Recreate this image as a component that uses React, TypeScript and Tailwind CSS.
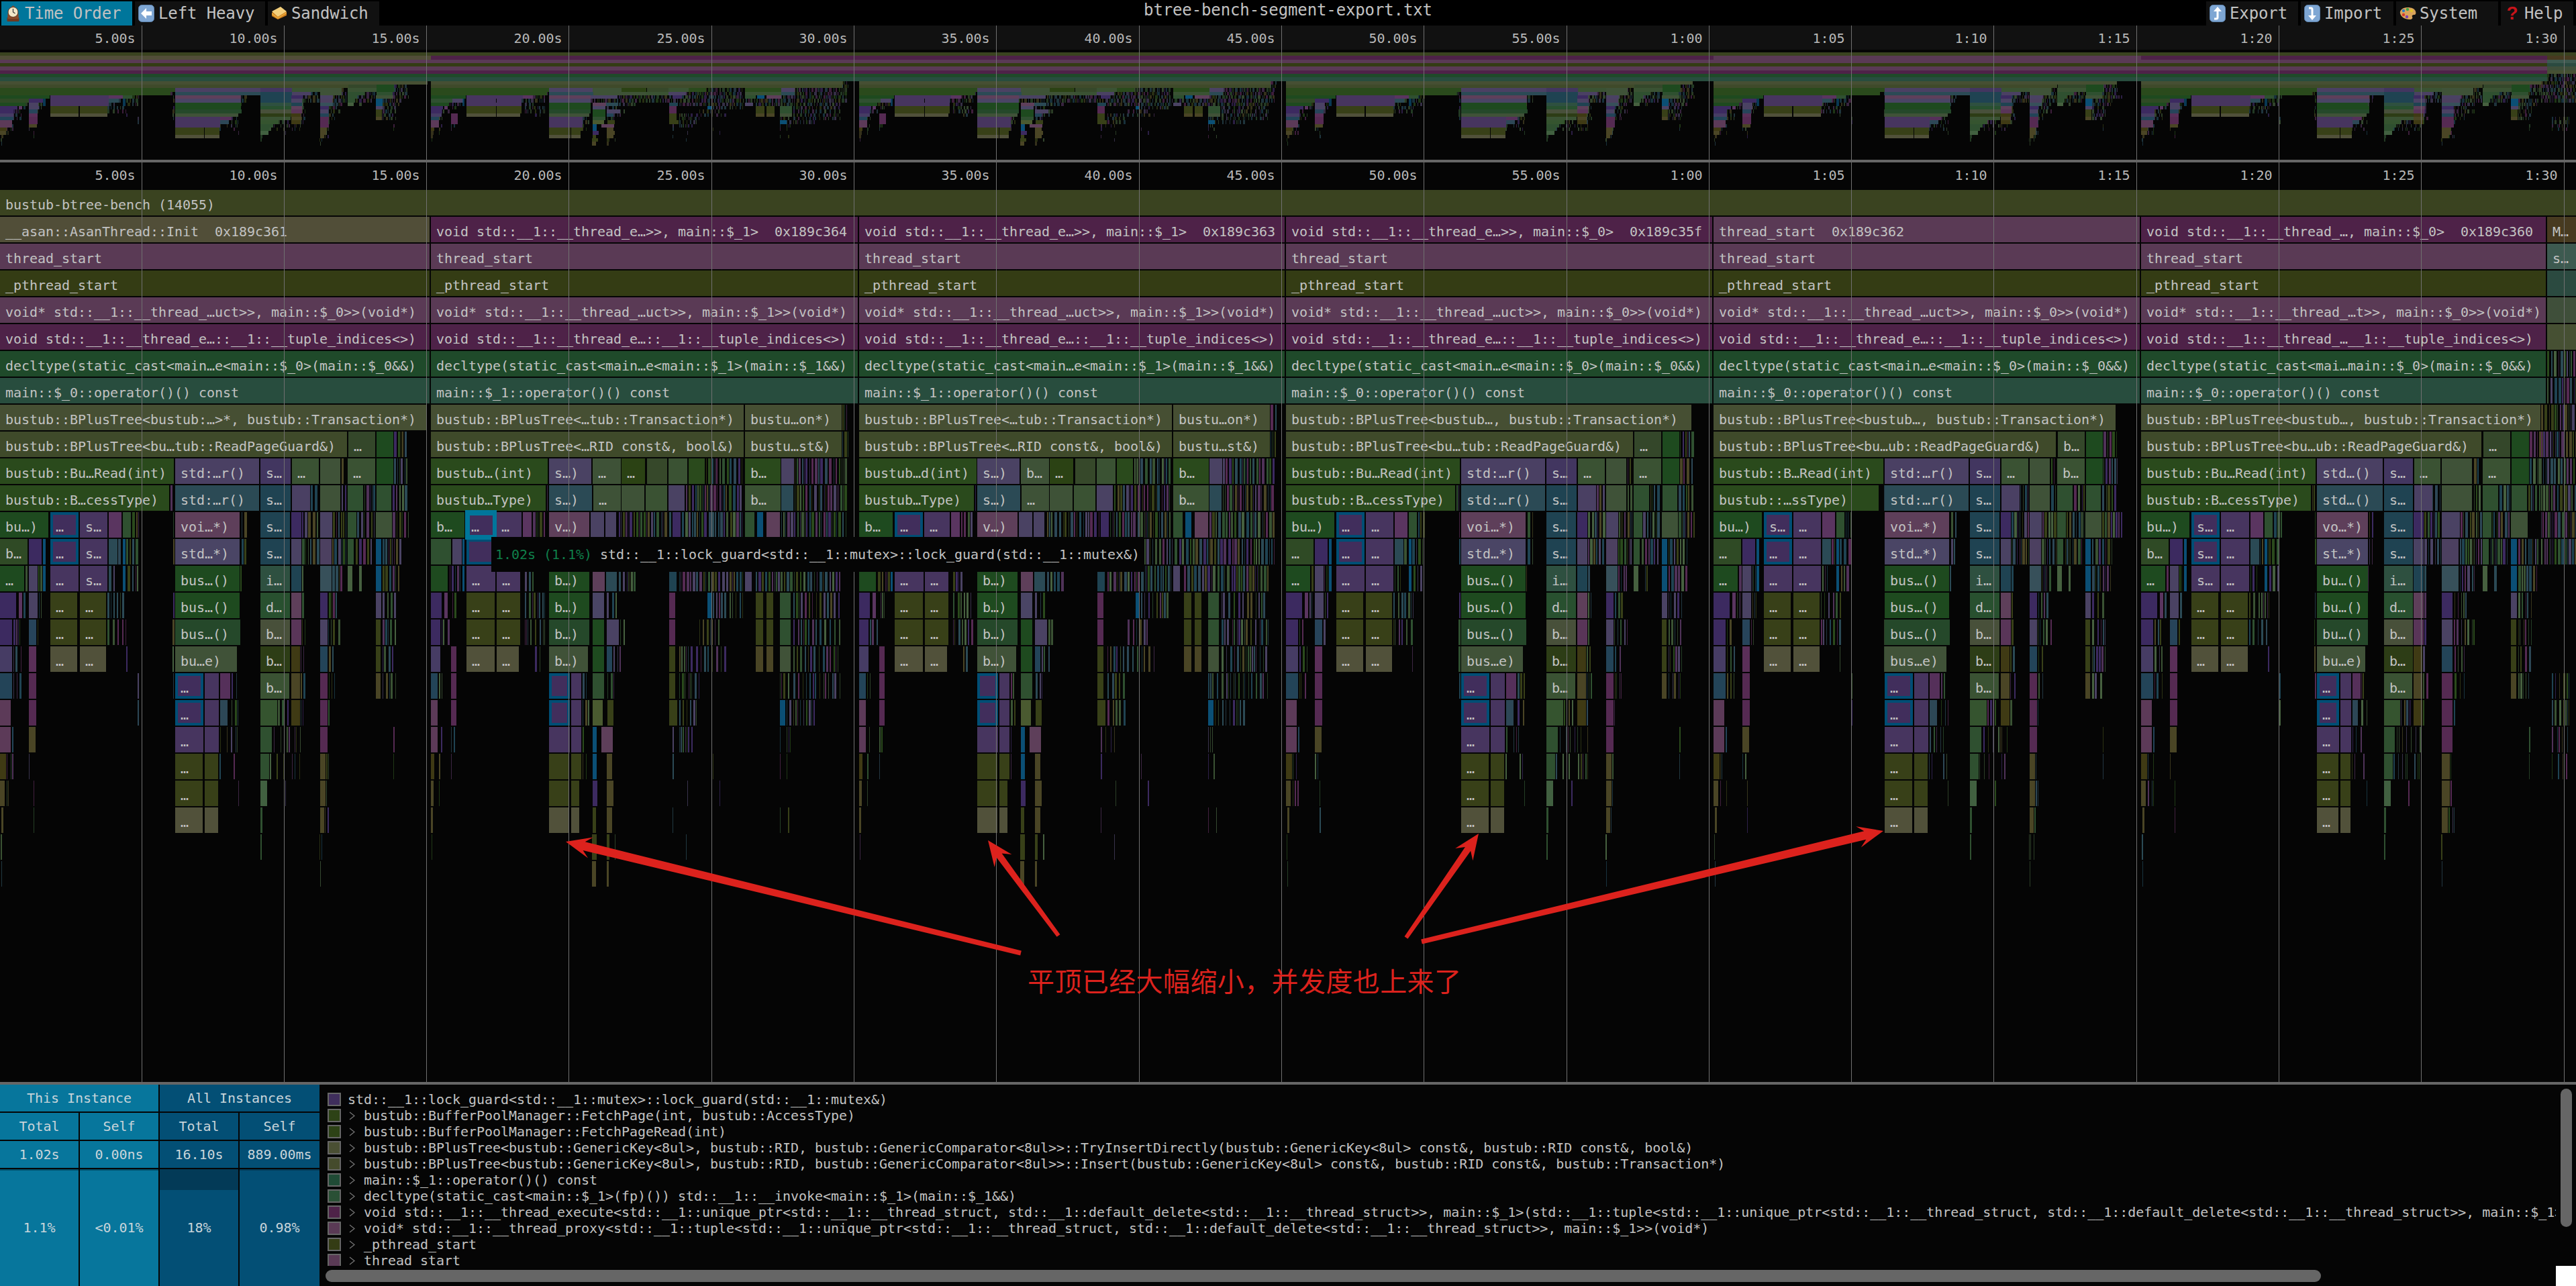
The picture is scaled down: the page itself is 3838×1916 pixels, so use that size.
import type { ReactNode } from 'react';

type Cell = [number, number, string, string?];
type ThreadDef = {
  x0: number;
  x1: number;
  rows: Record<number, Cell[]>;
  head: Record<number, string>;
  labels?: Record<string, string>;
  map?: number[][];
};

// flame colours
const G1 = '#1e4a1f';
const G2 = '#2f5030';
const D = '#2a4a1c';
const M = '#3a5233';
const T1 = '#1f4352';
const T2 = '#234458';
const T3 = '#37505a';
const P2 = '#47355f';
const P3 = '#4a4263';
const P4 = '#3c2a60';
const PK = '#5e3f5a';
const PK2 = '#552a52';
const O1 = '#384018';
const O2 = '#51513a';
const O4 = '#3f3a14';
const O5 = '#4a4525';
const B = '#0b4f75';
const SEL = 'sel';
const S = '~'; // zone of thin slivers

const TREE = '#464f33';
const TREE2 = '#3f4a2a';

const SLIVERS = [G2, P3, P4, '#4f3258', T1, M, D, '#2d4756', O1, '#2b4a55', PK2, '#46603f', O5];

// call tree below row 11 for the threads running main::$_0
const rowsA: Record<number, Cell[]> = {
  9: [[519, 559, '#34472a', '…'], [561, 586, G1], [587, 608, S]],
  10: [[261, 386, '#4a4063', 'std:…r()'], [388, 433, '#423660', 's…'], [435, 475, M, '…'], [477, 507, '#3f5238'], [509, 514, S], [518, 559, M, '…'], [561, 586, G1], [587, 608, S]],
  11: [[254, 258, S], [261, 386, '#2b4a55', 'std:…r()'], [388, 433, T1, 's…'], [435, 462, '#4a4063'], [463, 475, S], [477, 507, '#3f5238'], [509, 516, S], [518, 541, G2], [543, 559, S], [561, 583, G2], [585, 608, S]],
  12: [[0, 72, G1, 'bu…)'], [75, 117, SEL, '…'], [119, 160, P2, '…'], [162, 181, '#5a3560'], [183, 195, G2], [197, 209, S], [258, 259, S], [261, 357, PK, 'voi…*)'], [360, 368, S], [388, 432, T1, 's…'], [434, 449, P4], [450, 476, S], [477, 495, P3], [496, 517, S], [518, 531, G2], [532, 558, S], [560, 584, '#3e5237'], [585, 609, S]],
  13: [[0, 41, '#2f4a25', '…'], [43, 62, P4], [64, 68, B], [75, 117, SEL, '…'], [119, 160, P2, '…'], [162, 175, '#2b4a55'], [176, 181, S], [183, 187, B], [188, 206, S], [258, 260, S], [261, 357, '#4a4565', 'std…*)'], [360, 368, S], [388, 432, T1, 's…'], [434, 449, P3], [450, 476, S], [477, 494, '#4c4060'], [495, 517, S], [518, 527, G2], [530, 555, S], [560, 568, B], [570, 600, S]],
  14: [[0, 36, G1, '…'], [38, 42, S], [43, 56, P3], [57, 63, S], [64, 68, B], [75, 117, P2, '…'], [119, 160, P2, '…'], [162, 172, S], [183, 187, B], [190, 206, S], [261, 357, G1, 'bus…()'], [358, 360, S], [388, 432, '#2e5040', 'i…'], [434, 449, T1], [450, 453, S], [477, 494, T3], [495, 510, S], [518, 525, '#46603f'], [535, 540, S], [560, 568, B], [570, 598, S]],
  15: [[0, 24, P4], [28, 33, '#5a3560'], [35, 42, S], [43, 56, P3], [58, 64, S], [75, 115, O1, '…'], [119, 158, O1, '…'], [160, 190, S], [258, 260, S], [261, 357, G1, 'bus…()'], [388, 432, '#28502f', 'd…'], [434, 449, PK], [450, 455, S], [477, 488, P4], [490, 505, S], [560, 568, P3], [570, 590, S]],
  16: [[0, 18, P4], [20, 30, S], [43, 54, '#27445a'], [56, 60, S], [75, 115, O1, '…'], [119, 158, O1, '…'], [160, 190, S], [257, 260, S], [261, 358, '#25482a', 'bus…()'], [388, 432, '#48503a', 'b…'], [434, 449, '#593558'], [450, 455, S], [477, 488, P3], [489, 510, S], [560, 567, O1], [570, 590, S]],
  17: [[0, 18, '#463c64'], [20, 32, S], [43, 54, '#5a2f58'], [75, 115, O2, '…'], [119, 158, O2, '…'], [188, 190, S], [257, 260, S], [261, 353, '#405238', 'bu…e)'], [388, 432, '#2d3d16', 'b…'], [434, 447, O4], [448, 455, S], [477, 488, T2], [490, 500, S], [560, 567, O1], [570, 590, S]],
  18: [[0, 18, T2], [20, 32, S], [43, 54, PK2], [205, 207, S], [258, 260, S], [261, 303, SEL, '…'], [305, 326, P2], [328, 343, '#55305a'], [345, 356, S], [388, 431, M, 'b…'], [434, 447, O5], [448, 456, S], [477, 488, PK2], [490, 500, S], [560, 567, O5], [570, 590, S]],
  19: [[0, 16, '#5c3a58'], [43, 54, PK2], [205, 207, S], [261, 303, SEL, '…'], [305, 326, P2], [328, 339, '#2d4756'], [345, 356, S], [388, 413, '#35542f'], [414, 430, S], [434, 447, O4], [448, 452, S], [477, 488, PK2], [489, 491, S]],
  20: [[0, 16, '#5c3a58'], [18, 20, T2], [43, 53, O5], [261, 303, P2, '…'], [305, 326, P2], [328, 354, S], [388, 405, G2], [408, 450, S], [477, 488, PK2], [586, 588, S]],
  21: [[0, 9, O4], [10, 20, S], [43, 51, S], [261, 302, O1, '…'], [305, 325, O1], [327, 333, S], [348, 355, S], [388, 401, G2], [402, 425, S], [435, 450, S], [477, 485, O5], [486, 490, S], [586, 588, S]],
  22: [[0, 7, O5], [10, 20, S], [50, 52, S], [261, 302, O1, '…'], [305, 325, O1], [355, 357, S], [388, 398, '#416040'], [425, 427, S], [477, 485, O5], [486, 490, S]],
  23: [[2, 5, O5], [50, 52, S], [261, 302, O2, '…'], [305, 325, O2], [388, 391, G2], [477, 483, O5], [484, 490, S]],
  24: [[1, 4, S], [388, 390, G2], [476, 484, S]],
  25: [[2, 3, S], [477, 479, S]],
};

// same, for the threads running main::$_1
const rowsB: Record<number, Cell[]> = {
  8: [[613, 622, S]],
  9: [[613, 622, S]],
  10: [[176, 239, P3, 's…)'], [241, 283, '#3e5237', '…'], [284, 319, '#2b4214', '…'], [322, 352, '#36482a'], [354, 382, M], [384, 408, D], [410, 464, S], [468, 521, D, 'b…'], [522, 541, P3], [542, 620, S]],
  11: [[173, 174, S], [176, 240, '#2b4a55', 's…)'], [242, 283, '#3e5237', '…'], [284, 318, '#3e5237'], [320, 352, M], [354, 378, P3], [380, 464, S], [468, 521, M, 'b…'], [522, 540, '#2b4a55'], [542, 620, S]],
  12: [[0, 50, G1, 'b…'], [53, 95, SEL, '…'], [97, 135, P2, '…'], [137, 150, '#5a3560'], [152, 170, S], [176, 236, PK, 'v…)'], [238, 258, P3], [260, 276, P3], [280, 358, S], [360, 372, P4], [374, 464, S], [468, 482, G2], [486, 495, B], [500, 520, PK], [522, 620, S]],
  13: [[0, 30, G2], [32, 46, P3], [47, 50, B], [53, 95, SEL], [98, 133, P2], [135, 170, S], [176, 236, '#4a4565'], [238, 620, S]],
  14: [[0, 25, G1], [28, 46, S], [47, 50, B], [53, 96, P2, '…'], [98, 133, P2, '…'], [140, 155, S], [176, 236, G1, 'b…)'], [241, 259, PK], [261, 277, '#2b4a55'], [280, 305, S], [355, 366, '#1f4352'], [370, 465, S], [468, 478, P3], [484, 610, S]],
  15: [[0, 16, P4], [20, 25, '#5a3560'], [32, 40, S], [53, 95, O1, '…'], [98, 133, O1, '…'], [140, 170, S], [176, 236, G1, 'b…)'], [241, 258, '#4a4565'], [262, 280, S], [355, 364, PK2], [412, 418, B], [420, 465, S], [484, 495, O1], [500, 510, O1], [520, 536, G2], [540, 610, S]],
  16: [[0, 14, P4], [16, 30, S], [53, 95, O1, '…'], [98, 133, O1, '…'], [140, 170, S], [176, 236, '#25482a', 'b…)'], [241, 258, G1], [262, 280, P3], [282, 290, S], [355, 364, PK2], [400, 430, S], [484, 495, O1], [500, 510, O1], [520, 536, G2], [540, 610, S]],
  17: [[0, 14, '#463c64'], [30, 38, PK2], [53, 95, O2, '…'], [98, 131, O2, '…'], [155, 165, S], [176, 234, '#405238', 'b…)'], [241, 258, G1], [262, 270, T2], [272, 284, S], [355, 364, O1], [370, 440, S], [484, 495, O5], [500, 510, O5], [520, 536, '#405238'], [540, 610, S]],
  18: [[0, 10, T2], [12, 22, S], [30, 38, PK2], [176, 207, SEL], [209, 224, P2], [226, 234, S], [241, 258, G2], [263, 273, S], [355, 364, O1], [370, 400, S], [520, 536, S], [540, 610, S]],
  19: [[0, 10, '#5c3a58'], [30, 38, PK2], [176, 207, SEL], [209, 224, P2], [226, 236, S], [241, 256, '#4a5a30'], [263, 272, O1], [355, 367, O1], [370, 400, S], [520, 528, B], [530, 575, S]],
  20: [[0, 10, '#5c3a58'], [15, 17, S], [30, 36, S], [176, 207, P2], [209, 224, P2], [226, 234, S], [241, 247, B], [254, 271, PK], [360, 390, S], [520, 536, S]],
  21: [[0, 5, O4], [12, 16, S], [30, 34, S], [176, 206, O1], [209, 224, O1], [226, 232, S], [241, 247, B], [262, 270, O5], [360, 364, S], [420, 422, S], [520, 533, S]],
  22: [[0, 4, O5], [12, 14, S], [176, 206, O1], [209, 221, O1], [241, 248, P4], [262, 272, O5], [382, 384, S], [430, 432, S]],
  23: [[0, 3, O5], [176, 206, O2], [209, 221, O2], [241, 246, O1], [262, 270, O5], [360, 363, S], [520, 522, S], [532, 534, S]],
  24: [[1, 2, S], [240, 247, O1], [262, 266, O1], [274, 276, S], [380, 382, S]],
  25: [[240, 246, O5], [262, 265, O5]],
};

const rng = (seed: number) => () => {
  seed = (seed + 0x6d2b79f5) | 0;
  let t = Math.imul(seed ^ (seed >>> 15), 1 | seed);
  t = (t + Math.imul(t ^ (t >>> 7), 61 | t)) ^ t;
  return ((t ^ (t >>> 14)) >>> 0) / 4294967296;
};

const head = (n: string, r1: string, r4: string, r5: string, r6: string) => ({
  1: r1,
  2: 'thread_start',
  3: '_pthread_start',
  4: r4,
  5: r5,
  6: r6,
  7: `main::$_${n}::operator()() const`,
});

const v4 = (n: string) => `void* std::__1::__thread_…uct>>, main::$_${n}>>(void*)`;
const v5 = 'void std::__1::__thread_e…::__1::__tuple_indices<>)';
const v6 = (n: string) => `decltype(static_cast<main…e<main::$_${n}>(main::$_${n}&&)`;

const THREADS: ThreadDef[] = [
  {
    x0: 0,
    x1: 640,
    rows: rowsA,
    head: {
      ...head('0', '__asan::AsanThread::Init  0x189c361', v4('0'), v5, v6('0')),
      8: 'bustub::BPlusTree<bustub:…>*, bustub::Transaction*)|635',
      9: 'bustub::BPlusTree<bu…tub::ReadPageGuard&)|517',
      10: 'bustub::Bu…Read(int)|259',
      11: 'bustub::B…cessType)|252',
    },
    labels: { '12:119': 's…', '13:0': 'b…', '13:119': 's…', '14:119': 's…' },
  },
  {
    x0: 642,
    x1: 1278,
    rows: rowsB,
    head: {
      ...head('1', 'void std::__1::__thread_e…>>, main::$_1>  0x189c364', v4('1'), v5, v6('1')),
      8: 'bustub::BPlusTree<…tub::Transaction*)|466',
      9: 'bustub::BPlusTree<…RID const&, bool&)|466',
      10: 'bustub…(int)|174',
      11: 'bustub…Type)|171',
    },
    labels: {},
  },
  {
    x0: 1280,
    x1: 1914,
    rows: rowsB,
    head: {
      ...head('1', 'void std::__1::__thread_e…>>, main::$_1>  0x189c363', v4('1'), v5, v6('1')),
      8: 'bustub::BPlusTree<…tub::Transaction*)|466',
      9: 'bustub::BPlusTree<…RID const&, bool&)|466',
      10: 'bustub…d(int)|175',
      11: 'bustub…Type)|171',
    },
    labels: { '10:241': 'b…', '10:284': '…' },
  },
  {
    x0: 1916,
    x1: 2551,
    rows: rowsA,
    head: {
      ...head('0', 'void std::__1::__thread_e…>>, main::$_0>  0x189c35f', v4('0'), v5, v6('0')),
      8: 'bustub::BPlusTree<bustub…, bustub::Transaction*)|604',
      9: 'bustub::BPlusTree<bu…tub::ReadPageGuard&)|517',
      10: 'bustub::Bu…Read(int)|259',
      11: 'bustub::B…cessType)|252',
    },
    labels: { '17:261': 'bus…e)' },
  },
  {
    x0: 2553,
    x1: 3188,
    rows: rowsA,
    head: {
      ...head('0', 'thread_start  0x189c362', v4('0'), v5, v6('0')),
      8: 'bustub::BPlusTree<bustub…, bustub::Transaction*)|599',
      9: 'bustub::BPlusTree<bu…ub::ReadPageGuard&)|510',
      10: 'bustub::B…Read(int)|253',
      11: 'bustub::…ssType)|246',
    },
    labels: { '12:75': 's…', '9:519': 'b…', '10:518': 'b…', '17:261': 'bus…e)' },
    map: [[0, 0], [254, 254], [261, 255], [608, 602]],
  },
  {
    x0: 3190,
    x1: 3793,
    rows: rowsA,
    head: {
      ...head(
        '0',
        'void std::__1::__thread_…, main::$_0>  0x189c360',
        'void* std::__1::__thread_…t>>, main::$_0>>(void*)',
        'void std::__1::__thread_…__1::__tuple_indices<>)',
        'decltype(static_cast<mai…main::$_0>(main::$_0&&)',
      ),
      8: 'bustub::BPlusTree<bustub…, bustub::Transaction*)|595',
      9: 'bustub::BPlusTree<bu…ub::ReadPageGuard&)|507',
      10: 'bustub::Bu…Read(int)|260',
      11: 'bustub::B…cessType)|253',
    },
    labels: {
      '12:75': 's…',
      '13:75': 's…',
      '14:75': 's…',
      '13:0': 'b…',
      '10:261': 'std…()',
      '11:261': 'std…()',
      '12:261': 'vo…*)',
      '13:261': 'st…*)',
      '14:261': 'bu…()',
      '15:261': 'bu…()',
      '16:261': 'bu…()',
    },
    map: [[0, 0], [261, 262], [388, 362], [477, 448], [518, 509], [608, 600]],
  },
];

const rowColors: Record<number, string> = {
  2: '#5a3a55',
  3: '#343c14',
  4: '#5a3a55',
  5: '#4e2248',
  6: '#1f4a2a',
  7: '#284d3e',
  8: TREE,
  9: TREE2,
  10: D,
  11: D,
};

type Box = { x: number; w: number; r: number; fill: string; label?: string };

function buildCells(): Box[] {
  const out: Box[] = [{ x: 0, w: 3838, r: 0, fill: '#3a4320', label: 'bustub-btree-bench (14055)' }];
  const rand = rng(71);

  const sliver = (x0: number, x1: number, r: number) => {
    const gap = r < 15 ? 2.5 : r < 20 ? 5 : 9;
    const max = r < 15 ? 4 : r < 20 ? 3 : 1.5;
    let x = x0;
    while (x < x1) {
      const w = Math.min(1 + Math.floor(rand() * max), x1 - x);
      out.push({ x, w: Math.max(w, 1), r, fill: SLIVERS[Math.floor(rand() * SLIVERS.length)] });
      x += w + 1 + Math.floor(rand() * gap);
    }
  };

  THREADS.forEach((t, ti) => {
    const pts = t.map;
    const at = (x: number) => {
      if (!pts) return x;
      for (let i = 1; i < pts.length; i++) {
        if (x <= pts[i][0]) {
          const [a, b] = pts[i - 1];
          const [c, d] = pts[i];
          return b + ((x - a) * (d - b)) / (c - a);
        }
      }
      return x;
    };

    for (let r = 1; r <= 11; r++) {
      const [text, end] = t.head[r].split('|');
      const x1 = end ? t.x0 + Number(end) : t.x1;
      const fill =
        r === 1 ? (ti === 0 ? '#514e38' : ti === 4 ? '#5a3a55' : '#4e2248') : rowColors[r];
      out.push({ x: t.x0, w: x1 - t.x0, r, fill, label: text });
    }

    if (t.rows === rowsB) {
      out.push({ x: t.x0 + 468, w: 144, r: 8, fill: TREE, label: 'bustu…on*)' });
      out.push({ x: t.x0 + 468, w: 144, r: 9, fill: TREE2, label: 'bustu…st&)' });
    }

    Object.entries(t.rows).forEach(([rowKey, cells]) => {
      const r = Number(rowKey);
      cells.forEach(([a, b, fill, label]) => {
        const x0 = t.x0 + Math.round(at(a));
        const x1 = t.x0 + Math.round(at(b));
        if (x1 > t.x1) return;
        if (fill === S) {
          sliver(x0, x1, r);
          return;
        }
        out.push({ x: x0, w: x1 - x0, r, fill, label: t.labels?.[`${r}:${a}`] ?? label });
      });
    });
  });

  // the short thread at the far right
  const lastCol: [number, string, string?][] = [
    [1, '#473a20', 'M…'],
    [2, '#3d5a50', 's…'],
    [3, '#2b4a40'],
    [4, '#3f4f3a'],
    [5, '#465033'],
  ];
  lastCol.forEach(([r, fill, label]) => out.push({ x: 3795, w: 43, r, fill, label }));
  for (let r = 6; r <= 13; r++) sliver(r < 8 ? 3795 : 3786, 3838, r);
  for (let r = 14; r <= 17; r++) sliver(3802, 3830, r + 4);

  return out;
}

const CELLS = buildCells();

const TICKS = Array.from({ length: 18 }, (_, i) => {
  const n = i + 1;
  const secs = n * 5;
  const label =
    secs < 60 ? `${secs}.00s` : `${Math.floor(secs / 60)}:${String(secs % 60).padStart(2, '0')}`;
  return { x: Math.round(212.3 * n - 1.8) + 0.5, label };
});

function Minimap() {
  return (
    <svg width={3838} height={200} className="block">
      <rect x={0} y={0} width={3838} height={36} fill="#111111" />
      <rect x={0} y={36} width={3838} height={4} fill="#050505" />
      {CELLS.map((c, i) => (
        <rect
          key={i}
          x={c.x}
          y={40 + c.r * 5.33}
          width={c.w + (c.w > 6 ? 2 : 0)}
          height={5.4}
          fill={c.fill === SEL ? P2 : c.fill}
          fillOpacity={c.w <= 4 ? 0.7 : 1}
          shapeRendering="crispEdges"
        />
      ))}
      {TICKS.map((t) => (
        <g key={t.x}>
          <line x1={t.x} x2={t.x} y1={0} y2={200} stroke="#707070" strokeWidth={1} />
          <text x={t.x - 10} y={26} textAnchor="end" className="fill-[#b8b8b8] text-[20px]">
            {t.label}
          </text>
        </g>
      ))}
    </svg>
  );
}

function FlameCell({ c }: { c: Box }) {
  const y = 41 + c.r * 40;
  return (
    <>
      <rect
        x={c.x}
        y={y}
        width={c.w}
        height={38}
        fill={c.fill === SEL ? '#004E75' : c.fill}
        fillOpacity={c.w <= 1 ? 0.75 : 1}
        shapeRendering="crispEdges"
      />
      {c.fill === SEL && (
        <rect x={c.x + 4} y={y + 4} width={c.w - 8} height={30} fill="#412E5C" shapeRendering="crispEdges" />
      )}
      {c.label && (
        <text x={c.x + 8} y={y + 29} className="fill-[#c2c2c2] text-[20px] whitespace-pre">
          {c.label}
        </text>
      )}
    </>
  );
}

function arrowPoints(tail: number[], tip: number[], wTail: number, wNeck: number) {
  const dx = tip[0] - tail[0];
  const dy = tip[1] - tail[1];
  const len = Math.hypot(dx, dy);
  const ux = dx / len;
  const uy = dy / len;
  const nx = -uy;
  const ny = ux;
  const along = (d: number, side: number) => [tip[0] - ux * d + nx * side, tip[1] - uy * d + ny * side];
  const pts = [
    [tail[0] + (nx * wTail) / 2, tail[1] + (ny * wTail) / 2],
    along(28, wNeck / 2),
    along(38, 16),
    tip,
    along(38, -16),
    along(28, -wNeck / 2),
    [tail[0] - (nx * wTail) / 2, tail[1] - (ny * wTail) / 2],
  ];
  return pts.map((p) => p.join(',')).join(' ');
}

function FlameChart() {
  return (
    <div className="relative h-[1370px] w-full">
      <svg width={3838} height={1370} className="block">
        {TICKS.map((t) => (
          <text key={t.x} x={t.x - 10} y={26} textAnchor="end" className="fill-[#b8b8b8] text-[20px]">
            {t.label}
          </text>
        ))}
        {CELLS.map((c, i) => (
          <FlameCell key={i} c={c} />
        ))}
        {/* hovered frame */}
        <rect x={693} y={518} width={47} height={44} fill="#00769B" shapeRendering="crispEdges" />
        <rect x={700} y={526} width={34} height={29} fill="#412E5C" shapeRendering="crispEdges" />
        <text x={702} y={550} className="fill-[#c2c2c2] text-[20px]">
          …
        </text>
        {TICKS.map((t) => (
          <line key={t.x} x1={t.x} x2={t.x} y1={0} y2={1370} stroke="#707070" strokeWidth={1} />
        ))}
      </svg>

      {/* tooltip */}
      <div className="absolute left-[732px] top-[558px] flex h-[52px] w-[973px] items-center bg-[#050505] pl-[6px] whitespace-pre">
        <span className="text-[#0f7f4a]">1.02s (1.1%)</span>
        <span> std::__1::lock_guard&lt;std::__1::mutex&gt;::lock_guard(std::__1::mutex&amp;)</span>
      </div>

      {/* annotation drawn on top of the screenshot */}
      <svg width={3838} height={1370} className="pointer-events-none absolute left-0 top-0">
        <g fill="#dc221d">
          <polygon points={arrowPoints([1521, 1178], [843, 1012], 7, 13)} />
          <polygon points={arrowPoints([1577, 1152], [1472, 1010], 6, 10)} />
          <polygon points={arrowPoints([2095, 1155], [2203, 1000], 6, 10)} />
          <polygon points={arrowPoints([2118, 1161], [2806, 996], 7, 13)} />
        </g>
      </svg>
      <div className="absolute left-[1531px] top-[1198px] font-['Noto_Sans_CJK_SC',sans-serif] text-[40px] leading-[40px] tracking-[0.4px] whitespace-pre text-[#dc221d]">
        平顶已经大幅缩小，并发度也上来了
      </div>
    </div>
  );
}

const ClockIcon = () => (
  <svg width={25} height={24} viewBox="0 0 24 24">
    <rect x={3} y={18} width={18} height={6} rx={1} fill="#6f3a20" />
    <path d="M4 20Q2 8 12 0Q22 8 20 20Z" fill="#8b4a2a" />
    <circle cx={12} cy={10} r={7.5} fill="#f2e6c8" stroke="#5f3319" />
    <path d="M12 5v5l3 2" stroke="#333" strokeWidth={1.2} fill="none" />
  </svg>
);

const ArrowBox = ({ d }: { d: ReactNode }) => (
  <svg width={24} height={26} viewBox="0 0 24 26">
    <rect x={0.5} y={0.5} width={23} height={25} rx={5} fill="#7ea6d3" stroke="#5c82ad" />
    {d}
  </svg>
);

const SandwichIcon = () => (
  <svg width={24} height={20} viewBox="0 0 24 20">
    <path d="M1 9L14 1l9 7v5L10 19 1 14Z" fill="#c9791c" />
    <path d="M1 7L14 0l9 7L10 15Z" fill="#f3cf7c" />
    <path d="M1 9l9 7 13-8v2L10 18 1 12Z" fill="#e8a93a" />
  </svg>
);

const PaletteIcon = () => (
  <svg width={25} height={20} viewBox="0 0 25 20">
    <path d="M12 1C5 1 0 5 1 10c1 5 7 9 14 9 4 0 5-2 4-4-1-2 1-3 3-3 2 0 3-2 2-5-1-4-6-6-12-6Z" fill="#d9a35a" />
    <circle cx={6} cy={6} r={2.2} fill="#2f7fc1" />
    <circle cx={12} cy={4} r={2.2} fill="#3da24a" />
    <circle cx={18} cy={6} r={2.2} fill="#e2c22c" />
    <circle cx={6} cy={12} r={2.2} fill="#d43a2f" />
    <circle cx={11} cy={15} r={2.2} fill="#7a3fb0" />
  </svg>
);

function ToolButton({ className, icon, label }: { className: string; icon: ReactNode; label: string }) {
  return (
    <div className={`flex h-[36px] items-center bg-[#111111] ${className}`}>
      <span className="flex w-[32px] justify-center pl-[2px]">{icon}</span>
      <span className="pl-[3px] text-[24px] tracking-[-0.12px]">{label}</span>
    </div>
  );
}

function Toolbar() {
  return (
    <div className="grid h-[38px] grid-cols-[1fr_auto_1fr] items-end bg-black">
      <div className="flex gap-[4px] pl-[2px]">
        <ToolButton className="w-[195px] bg-[#00769B]!" icon={<ClockIcon />} label="Time Order" />
        <ToolButton
          className="w-[194px]"
          icon={
            <ArrowBox d={<path d="M4 13l8-8v5h8v6h-8v5Z" fill="#ffffff" />} />
          }
          label="Left Heavy"
        />
        <ToolButton className="w-[166px]" icon={<SandwichIcon />} label="Sandwich" />
      </div>
      <div className="h-[32px] self-start text-center text-[24px] leading-[30px] tracking-[-0.12px]">
        btree-bench-segment-export.txt
      </div>
      <div className="flex justify-end gap-[4px] pr-[4px]">
        <ToolButton
          className="w-[137px]"
          icon={
            <ArrowBox
              d={
                <>
                  <path d="M7 21h3a2 2 0 0 0 2-2V9" stroke="#ffffff" strokeWidth={3} fill="none" />
                  <path d="M12 3l6 7H6Z" fill="#ffffff" />
                </>
              }
            />
          }
          label="Export"
        />
        <ToolButton
          className="w-[138px]"
          icon={
            <ArrowBox
              d={
                <>
                  <path d="M7 5h3a2 2 0 0 1 2 2v10" stroke="#ffffff" strokeWidth={3} fill="none" />
                  <path d="M12 23l6-7H6Z" fill="#ffffff" />
                </>
              }
            />
          }
          label="Import"
        />
        <ToolButton className="w-[152px]" icon={<PaletteIcon />} label="System" />
        <ToolButton
          className="w-[108px]"
          icon={
            <span className="font-['Liberation_Sans',sans-serif] text-[28px] leading-[28px] font-bold text-[#c9141a]">
              ?
            </span>
          }
          label="Help"
        />
      </div>
    </div>
  );
}

const STACK = [
  ['bg-[#3f2e5c]', 'std::__1::lock_guard<std::__1::mutex>::lock_guard(std::__1::mutex&)'],
  ['bg-[#2d4216]', 'bustub::BufferPoolManager::FetchPage(int, bustub::AccessType)'],
  ['bg-[#2d4216]', 'bustub::BufferPoolManager::FetchPageRead(int)'],
  ['bg-[#4a4f33]', 'bustub::BPlusTree<bustub::GenericKey<8ul>, bustub::RID, bustub::GenericComparator<8ul>>::TryInsertDirectly(bustub::GenericKey<8ul> const&, bustub::RID const&, bool&)'],
  ['bg-[#454b2c]', 'bustub::BPlusTree<bustub::GenericKey<8ul>, bustub::RID, bustub::GenericComparator<8ul>>::Insert(bustub::GenericKey<8ul> const&, bustub::RID const&, bustub::Transaction*)'],
  ['bg-[#1f4a35]', 'main::$_1::operator()() const'],
  ['bg-[#2a5035]', 'decltype(static_cast<main::$_1>(fp)()) std::__1::__invoke<main::$_1>(main::$_1&&)'],
  ['bg-[#4e2248]', 'void std::__1::__thread_execute<std::__1::unique_ptr<std::__1::__thread_struct, std::__1::default_delete<std::__1::__thread_struct>>, main::$_1>(std::__1::tuple<std::__1::unique_ptr<std::__1::__thread_struct, std::__1::default_delete<std::__1::__thread_struct>>, main::$_1>&, std::__1::__tuple_indices<>)'],
  ['bg-[#5a3a55]', 'void* std::__1::__thread_proxy<std::__1::tuple<std::__1::unique_ptr<std::__1::__thread_struct, std::__1::default_delete<std::__1::__thread_struct>>, main::$_1>>(void*)'],
  ['bg-[#343c14]', '_pthread_start'],
  ['bg-[#5a3a55]', 'thread_start'],
];

function StatCell({ className, children }: { className: string; children: ReactNode }) {
  return <div className={`flex items-center justify-center ${className}`}>{children}</div>;
}

function Bar({ className, pct, dark, label }: { className: string; pct: number; dark: string; label: string }) {
  return (
    <div className={`relative flex items-center justify-center ${className}`}>
      <div className={`absolute inset-x-0 top-0 ${dark}`} style={{ height: `${Math.max(pct * 1.74, 2)}px` }} />
      <span className="relative">{label}</span>
    </div>
  );
}

function StatsTable() {
  return (
    <div className="grid w-[476px] shrink-0 grid-cols-[117px_117px_117px_119px] grid-rows-[40px_40px_40px_174px] gap-[2px] text-[#c8d4da]">
      <StatCell className="col-span-2 bg-[#07769C]">This Instance</StatCell>
      <StatCell className="col-span-2 bg-[#034F75]">All Instances</StatCell>
      <StatCell className="bg-[#07769C]">Total</StatCell>
      <StatCell className="bg-[#07769C]">Self</StatCell>
      <StatCell className="bg-[#034F75]">Total</StatCell>
      <StatCell className="bg-[#034F75]">Self</StatCell>
      <StatCell className="bg-[#07769C]">1.02s</StatCell>
      <StatCell className="bg-[#07769C]">0.00ns</StatCell>
      <StatCell className="bg-[#034F75]">16.10s</StatCell>
      <StatCell className="bg-[#034F75]">889.00ms</StatCell>
      <Bar className="bg-[#07769C]" dark="bg-[#00506b]" pct={1.1} label="1.1%" />
      <Bar className="bg-[#07769C]" dark="bg-[#00506b]" pct={0.01} label="<0.01%" />
      <Bar className="bg-[#034F75]" dark="bg-[#033a57]" pct={18} label="18%" />
      <Bar className="bg-[#034F75]" dark="bg-[#033a57]" pct={0.98} label="0.98%" />
    </div>
  );
}

function StackList() {
  return (
    <div className="relative h-[300px] flex-1 bg-[#050505]">
      <div className="h-[270px] w-[3332px] overflow-hidden pt-[10px] pl-[12px]">
        {STACK.map(([swatch, name], i) => (
          <div key={i} className="flex h-[24px] items-center whitespace-pre">
            <span className={`h-[20px] w-[20px] shrink-0 border-2 border-[#666666] ${swatch}`} />
            {i === 0 ? (
              <span className="ml-[10px]">{name}</span>
            ) : (
              <>
                <svg width={9} height={13} viewBox="0 0 9 13" className="ml-[12px] shrink-0">
                  <polyline points="1,1 8,6.5 1,12" fill="none" stroke="#777777" strokeWidth={1.2} />
                </svg>
                <span className="ml-[13px]">{name}</span>
              </>
            )}
          </div>
        ))}
      </div>
      {/* scrollbars */}
      <div className="absolute top-[6px] left-[3339px] h-[206px] w-[17px] rounded-[9px] bg-[#666666]" />
      <div className="absolute top-[276px] left-[9px] h-[18px] w-[2973px] rounded-[9px] bg-[#666666]" />
      <div className="absolute top-[270px] left-[3332px] h-[30px] w-[30px] bg-white" />
    </div>
  );
}

export default function App() {
  return (
    <div className="h-[1916px] w-[3838px] overflow-hidden bg-[#050505] font-['DejaVu_Sans_Mono',monospace] text-[20px] tracking-[-0.04px] text-[#c2c2c2]">
      <Toolbar />
      <Minimap />
      <div className="h-[4px] bg-[#666666]" />
      <FlameChart />
      <div className="h-[4px] bg-[#666666]" />
      <div className="flex h-[300px]">
        <StatsTable />
        <StackList />
      </div>
    </div>
  );
}
